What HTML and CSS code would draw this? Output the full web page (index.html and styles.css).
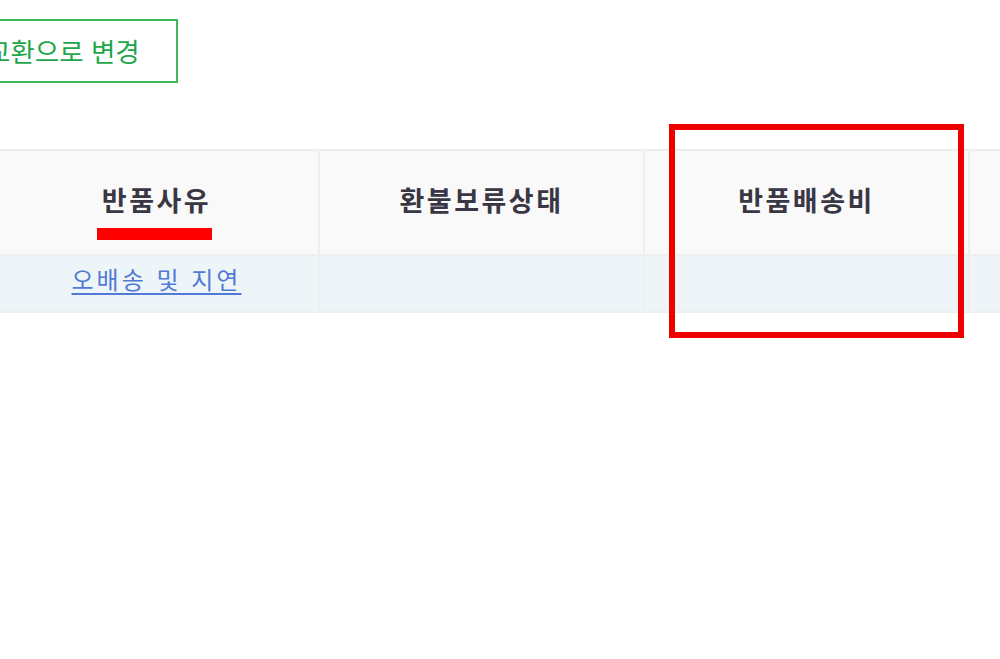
FILE: index.html
```html
<!DOCTYPE html>
<html lang="ko">
<head>
<meta charset="UTF-8" />
<meta name="viewport" content="width=device-width, initial-scale=1" />
<title>반품 상세</title>
<link rel="stylesheet" href="styles.css">
</head>
<body>
<div class="page">
  <div class="toolbar">
    <button class="btn-change" type="button">교환으로 변경</button>
  </div>

  <table class="claim-table">
    <thead>
      <tr>
        <th><span class="mark">반품사유</span></th>
        <th>환불보류상태</th>
        <th>반품배송비</th>
        <th></th>
      </tr>
    </thead>
    <tbody>
      <tr>
        <td><a href="#" class="reason-link">오배송 및 지연</a></td>
        <td></td>
        <td></td>
        <td></td>
      </tr>
    </tbody>
  </table>

  <!-- annotation overlays -->
  <div class="note-underline" aria-hidden="true"></div>
  <div class="note-box" aria-hidden="true"></div>
</div>
</body>
</html>
```

FILE: styles.css
```css
/* Reset and base */
* {
  box-sizing: border-box;
}
html, body {
  margin: 0;
  padding: 0;
  height: 100%;
  background: #ffffff;
  overflow: hidden;
  font-family: "Noto Sans CJK KR", "Noto Sans", sans-serif;
}

.page {
  position: relative;
  width: 1000px;
  height: 659px;
  overflow: hidden;
}

/* Top button bar */
.toolbar {
  padding-top: 19px;
  height: 149px;
}
.btn-change {
  margin-left: -52px;
  height: 64px;
  padding: 0 36px 0 36px;
  background: #ffffff;
  border: 2px solid #3cb85e;
  color: #1ea64a;
  font-family: inherit;
  font-size: 26.5px;
  line-height: 1;
  cursor: pointer;
}

/* Claim table */
.claim-table {
  margin-left: -7px;
  border-collapse: collapse;
  table-layout: fixed;
  width: 1300px;
}
.claim-table th,
.claim-table td {
  width: 325px;
  border: 2px solid #efefef;
  text-align: center;
  padding: 0;
}
.claim-table th {
  height: 105px;
  padding-bottom: 6px;
  background: #f9f9f9;
  color: #3a3744;
  font-size: 27px;
  font-weight: bold;
  letter-spacing: 2.5px;
}
.claim-table td {
  height: 57px;
  background: #edf5f8;
  padding-bottom: 10px;
}
.reason-link {
  color: #5279d6;
  font-size: 24px;
  letter-spacing: 3px;
  text-decoration: underline;
  text-underline-offset: 4px;
}

/* Red annotation marks */
.note-underline {
  position: absolute;
  left: 97px;
  top: 228px;
  width: 115px;
  height: 12px;
  background: #ff0000;
}
.note-box {
  position: absolute;
  left: 669px;
  top: 124px;
  width: 295px;
  height: 214px;
  border: 6px solid #ee0000;
}
```
